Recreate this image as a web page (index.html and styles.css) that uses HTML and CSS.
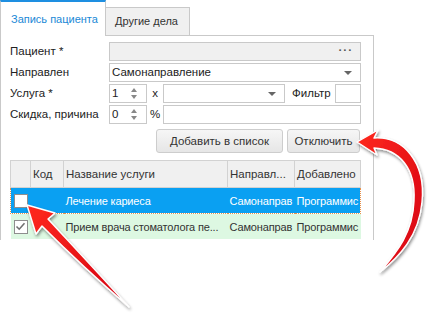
FILE: index.html
```html
<!DOCTYPE html>
<html>
<head>
    <title>Запись пациента</title>
    <link rel="stylesheet" href="styles.css">
</head>
<body>
    <div class="window">
        <div class="tabs">
            <div class="tab tab-active">Запись пациента</div>
            <div class="tab tab-other">Другие дела</div>
            <div class="tab-filler"></div>
        </div>

        <div class="panel">
            <div class="form">
                <div class="label">Пациент *</div>
                <div class="field field-readonly"><span class="dots">···</span></div>

                <div class="label">Направлен</div>
                <div class="field">Самонаправление<span class="drop"></span></div>

                <div class="label">Услуга *</div>
                <div class="line">
                    <div class="field spin">1<span class="spin-arrows"></span></div>
                    <div class="sign">x</div>
                    <div class="field combo"><span class="drop"></span></div>
                    <div class="filter-label">Фильтр</div>
                    <div class="field filter"></div>
                </div>

                <div class="label">Скидка, причина</div>
                <div class="line">
                    <div class="field spin">0<span class="spin-arrows"></span></div>
                    <div class="sign">%</div>
                    <div class="field grow"></div>
                </div>
            </div>

            <div class="actions">
                <button class="btn btn-add">Добавить в список</button>
                <button class="btn btn-off">Отключить</button>
            </div>

            <table class="grid">
                <colgroup>
                    <col class="c-check">
                    <col class="c-code">
                    <col class="c-name">
                    <col class="c-dir">
                    <col class="c-added">
                </colgroup>
                <thead>
                    <tr>
                        <th></th>
                        <th>Код</th>
                        <th>Название услуги</th>
                        <th>Направл...</th>
                        <th>Добавлено</th>
                    </tr>
                </thead>
                <tbody>
                    <tr class="row-selected">
                        <td><span class="check"></span></td>
                        <td></td>
                        <td>Лечение кариеса</td>
                        <td>Самонаправ</td>
                        <td>Программис</td>
                    </tr>
                    <tr class="row-done">
                        <td><span class="check checked"><svg width="11" height="11" viewBox="0 0 11 11"><path d="M1.5 5.5 L4.2 8.2 L9.5 2.2" fill="none" stroke="#707070" stroke-width="1.6"/></svg></span></td>
                        <td></td>
                        <td>Прием врача стоматолога пе...</td>
                        <td>Самонаправ</td>
                        <td>Программис</td>
                    </tr>
                </tbody>
            </table>
        </div>

        <!-- callout arrows drawn over the form -->
        <svg class="arrows" width="437" height="325" viewBox="0 0 437 325">
            <defs>
                <filter id="shadow" x="-30%" y="-30%" width="160%" height="160%">
                    <feDropShadow dx="1" dy="2" stdDeviation="1.6" flood-color="#000" flood-opacity="0.45"/>
                </filter>
                <linearGradient id="red" x1="0" y1="0" x2="1" y2="1">
                    <stop offset="0" stop-color="#ff2a20"/>
                    <stop offset="1" stop-color="#d40010"/>
                </linearGradient>
            </defs>
            <g filter="url(#shadow)" fill="url(#red)" stroke="#fff" stroke-width="1.4" stroke-linejoin="round">
                <path d="M357 142 L378 130 L374 138 C403 136 426 162 422 202 C419 236 399 257 380 272 C395 254 413 234 414 201 C416 168 399 149 374 148 L377 155 Z"/>
                <path d="M27 205 L55 213 L48 219 C72 245 100 275 129 307 C98 280 68 252 42 226 L36 234 Z"/>
            </g>
        </svg>
    </div>
</body>
</html>
```

FILE: styles.css
```css
body {
    margin: 0;
    font-family: "Liberation Sans", Arial, sans-serif;
    font-size: 11.5px;
    color: #333;
    background: #fff;
}

.window {
    position: relative;
    width: 437px;
    height: 325px;
    overflow: hidden;
}

/* tabs */
.tabs {
    display: flex;
    align-items: flex-end;
    width: 374px;
    height: 36px;
}

.tab {
    box-sizing: border-box;
    white-space: nowrap;
    font-size: 11px;
}

.tab-active {
    width: 106px;
    height: 36px;
    border-top: 2px solid #1e8fe1;
    border-right: 1px solid #c9c9c9;
    border-left: 1px solid #c9c9c9;
    padding: 10px 0 0 10px;
    line-height: 14px;
    color: #1a88d6;
}

.tab-other {
    width: 84px;
    height: 29px;
    border: 1px solid #c9c9c9;
    border-left: none;
    background: #f0f0f0;
    padding: 6px 0 0 9px;
    line-height: 14px;
}

.tab-filler {
    flex: 1;
    height: 1px;
    background: #c9c9c9;
}

/* panel */
.panel {
    box-sizing: border-box;
    width: 374px;
    height: 204px;
    border-left: 1px solid #c9c9c9;
    border-right: 1px solid #c9c9c9;
    padding: 6px 13px 0 9px;
    overflow: hidden;
}

.form {
    display: grid;
    grid-template-columns: 99px 1fr;
    grid-auto-rows: 19px;
    row-gap: 2px;
}

.label {
    line-height: 19px;
    color: #222;
}

.line {
    display: flex;
}

.field {
    position: relative;
    box-sizing: border-box;
    height: 19px;
    border: 1px solid #c9c9c9;
    background: #fff;
    padding-left: 2px;
    line-height: 17px;
    color: #222;
}

.field-readonly {
    background: #f0f0f0;
}

.dots {
    position: absolute;
    right: 7px;
    top: -1px;
    color: #555;
    font-weight: bold;
    letter-spacing: 1px;
}

.drop {
    position: absolute;
    right: 8px;
    top: 7px;
    width: 0;
    height: 0;
    border-left: 4px solid transparent;
    border-right: 4px solid transparent;
    border-top: 4px solid #666;
}

.spin {
    width: 38px;
}

.spin-arrows::before,
.spin-arrows::after {
    content: "";
    position: absolute;
    left: 21px;
    width: 0;
    height: 0;
    border-left: 3px solid transparent;
    border-right: 3px solid transparent;
}

.spin-arrows::before {
    top: 3px;
    border-bottom: 4px solid #888;
}

.spin-arrows::after {
    top: 10px;
    border-top: 4px solid #888;
}

.sign {
    width: 16px;
    text-align: center;
    line-height: 19px;
    color: #222;
}

.combo {
    width: 122px;
}

.filter-label {
    width: 50px;
    padding-left: 7px;
    box-sizing: border-box;
    line-height: 19px;
    color: #222;
}

.filter {
    width: 26px;
}

.grow {
    flex: 1;
}

/* buttons */
.actions {
    display: flex;
    justify-content: flex-end;
    gap: 4px;
    margin-top: 5px;
}

.btn {
    box-sizing: border-box;
    height: 24px;
    border: 1px solid #cdcdcd;
    border-radius: 3px;
    background: linear-gradient(#f6f6f6, #e6e6e6);
    font-family: inherit;
    font-size: 11.5px;
    color: #333;
    padding: 0;
}

.btn-add {
    width: 127px;
}

.btn-off {
    width: 73px;
}

/* grid */
.grid {
    margin-top: 7px;
    width: 350px;
    border-collapse: collapse;
    table-layout: fixed;
}

.c-check { width: 20px; }
.c-code { width: 33px; }
.c-name { width: 164px; }
.c-dir { width: 67px; }
.c-added { width: 66px; }

.grid th {
    height: 26px;
    background: #f0f0f0;
    border: 1px solid #d2d2d2;
    font-weight: normal;
    text-align: left;
    padding: 0 0 0 2px;
    white-space: nowrap;
    overflow: hidden;
}

.grid td {
    height: 25px;
    padding: 0 0 0 2px;
    font-size: 11px;
    letter-spacing: -0.15px;
    white-space: nowrap;
    overflow: hidden;
}

.row-selected td {
    background: #0aa0f2;
    color: #fff;
    border-top: 1px dotted #e8904a;
    border-bottom: 1px dotted #e8904a;
}

.row-selected td:first-child {
    border-left: 1px dotted #e8904a;
}

.row-selected td:last-child {
    border-right: 1px dotted #e8904a;
}

.row-done td {
    background: #ddf8e2;
}

.check {
    display: block;
    box-sizing: border-box;
    width: 14px;
    height: 14px;
    margin-left: 1px;
    border: 1px solid #8e8e8e;
    background: #fff;
}

.check svg {
    display: block;
    margin: 0.5px;
}

.arrows {
    position: absolute;
    left: 0;
    top: 0;
    pointer-events: none;
}
```
